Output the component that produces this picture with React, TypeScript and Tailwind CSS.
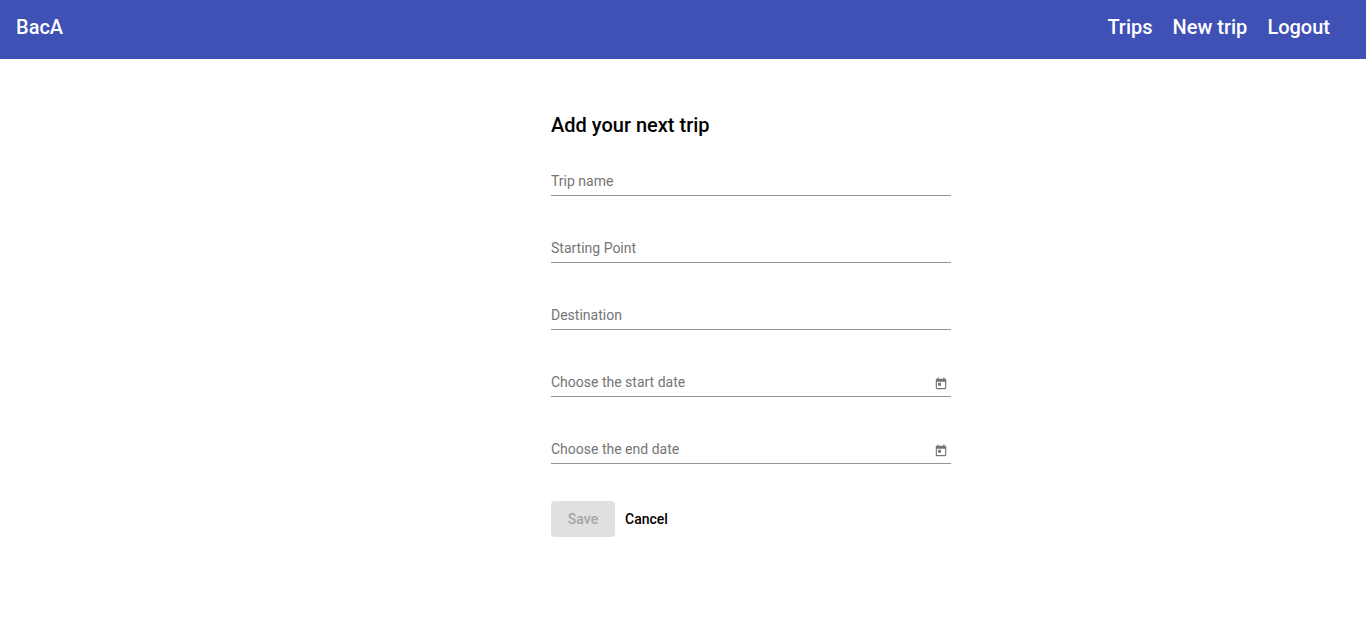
import { useState } from 'react';

const fields = [
  { id: 'name', label: 'Trip name', date: false },
  { id: 'start', label: 'Starting Point', date: false },
  { id: 'destination', label: 'Destination', date: false },
  { id: 'startDate', label: 'Choose the start date', date: true },
  { id: 'endDate', label: 'Choose the end date', date: true },
];

function CalendarIcon() {
  return (
    <svg viewBox="0 0 24 24" className="size-3.5" fill="currentColor" aria-hidden="true">
      <path d="M19 3h-1V1h-2v2H8V1H6v2H5c-1.11 0-1.99.9-1.99 2L3 19c0 1.1.89 2 2 2h14c1.1 0 2-.9 2-2V5c0-1.1-.9-2-2-2zm0 16H5V8h14v11zM7 10h5v5H7z" />
    </svg>
  );
}

function Field({ id, label, date }: { id: string; label: string; date: boolean }) {
  const [value, setValue] = useState('');
  return (
    <div className="relative flex h-7 border-b border-[#949494] text-sm leading-5">
      <input
        id={id}
        value={value}
        onChange={(e) => setValue(e.target.value)}
        placeholder=" "
        className="peer min-w-0 flex-1 bg-transparent text-black/87 outline-none"
      />
      {/* Floating label: rests over the empty input, rises once it is filled */}
      <label
        htmlFor={id}
        className="pointer-events-none absolute left-0 top-[3px] text-[#757575] transition-transform peer-focus:-translate-y-5 peer-not-placeholder-shown:-translate-y-5"
      >
        {label}
      </label>
      {date && (
        <button type="button" aria-label="Open calendar" className="flex w-5 items-end justify-center pb-[5px] text-[#757575]">
          <CalendarIcon />
        </button>
      )}
    </div>
  );
}

export default function App() {
  return (
    <div className="font-[Roboto,sans-serif] text-black">
      <header className="flex items-start justify-between bg-[#3f51b5] pt-[13px] pb-[18px] pl-4 pr-9 text-xl font-medium text-white">
        <a href="#home">BacA</a>
        <nav className="flex gap-5">
          <a href="#trips">Trips</a>
          <a href="#new">New trip</a>
          <a href="#logout">Logout</a>
        </nav>
      </header>
      <main className="flex justify-center pl-34 pt-[50px]">
        <form className="w-full max-w-[400px]" onSubmit={(e) => e.preventDefault()}>
          <h1 className="text-xl leading-8 font-medium">Add your next trip</h1>
          <div className="mt-[27px] flex flex-col gap-[39px]">
            {fields.map((f) => (
              <Field key={f.id} {...f} />
            ))}
          </div>
          <div className="mt-[37px] flex text-sm leading-9 font-medium">
            <button type="submit" disabled className="h-9 w-16 rounded bg-[#e0e0e0] text-[#a6a6a6]">Save</button>
            <button type="button" className="ml-2.5 h-9">Cancel</button>
          </div>
        </form>
      </main>
    </div>
  );
}
